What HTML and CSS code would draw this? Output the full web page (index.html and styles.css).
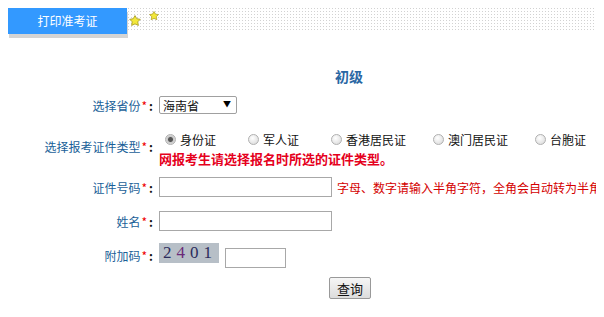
FILE: index.html
```html
<!DOCTYPE html>
<html lang="zh-cn">
<head>
    <meta charset="UTF-8">
    <meta name="viewport" content="width=device-width, initial-scale=1.0">
    <title>打印准考证</title>
    <link rel="stylesheet" href="styles.css">
</head>
<body>
    <div class="top">
        <div class="tab">打印准考证</div>
        <div class="dots">
            <svg class="star star-big" viewBox="0 0 10 10"><polygon points="5,0.5 6.5,3.1 9.4,3.6 7.3,5.7 7.8,8.7 5,7.4 2.2,8.7 2.7,5.7 0.6,3.6 3.5,3.1"/></svg>
            <svg class="star star-small" viewBox="0 0 10 10"><polygon points="5,0.5 6.5,3.1 9.4,3.6 7.3,5.7 7.8,8.7 5,7.4 2.2,8.7 2.7,5.7 0.6,3.6 3.5,3.1"/></svg>
        </div>
    </div>

    <form class="query">
        <h2 class="level">初级</h2>

        <!-- 省份 -->
        <div class="row">
            <label class="name">选择省份<em>*</em><b>:</b></label>
            <div class="field">
                <span class="select-wrap">
                    <select class="province">
                        <option>海南省</option>
                    </select>
                    <span class="arrow">▼</span>
                </span>
            </div>
        </div>

        <!-- 证件类型 -->
        <div class="row row-tall">
            <label class="name">选择报考证件类型<em>*</em><b>:</b></label>
            <div class="field field-stack">
                <div class="radios">
                    <label class="radio-item"><input type="radio" name="idtype" checked>身份证</label>
                    <label class="radio-item"><input type="radio" name="idtype">军人证</label>
                    <label class="radio-item wide"><input type="radio" name="idtype">香港居民证</label>
                    <label class="radio-item wide"><input type="radio" name="idtype">澳门居民证</label>
                    <label class="radio-item"><input type="radio" name="idtype">台胞证</label>
                </div>
                <div class="note">网报考生请选择报名时所选的证件类型。</div>
            </div>
        </div>

        <!-- 证件号码 -->
        <div class="row">
            <label class="name">证件号码<em>*</em><b>:</b></label>
            <div class="field">
                <input type="text" class="text-input">
                <span class="hint">字母、数字请输入半角字符，全角会自动转为半角</span>
            </div>
        </div>

        <!-- 姓名 -->
        <div class="row">
            <label class="name">姓名<em>*</em><b>:</b></label>
            <div class="field">
                <input type="text" class="text-input">
            </div>
        </div>

        <!-- 附加码 -->
        <div class="row">
            <label class="name">附加码<em>*</em><b>:</b></label>
            <div class="field field-code">
                <span class="captcha">2<i>4</i>01</span>
                <input type="text" class="code-input">
            </div>
        </div>

        <div class="row row-btn">
            <span></span>
            <div class="field">
                <button type="button" class="btn">查询</button>
            </div>
        </div>
    </form>
</body>
</html>
```

FILE: styles.css
```css
body {
    margin: 8px;
    font-family: "Noto Sans CJK SC", "Liberation Sans", sans-serif;
    font-size: 12px;
    color: #222;
    background: #fff;
}

.top {
    display: flex;
    margin-right: -8px;
    height: 30px;
}

.tab {
    width: 119px;
    height: 26px;
    line-height: 26px;
    background: #3399ff;
    color: #fff;
    text-align: center;
    font-size: 12px;
    box-shadow: 1px 4px 0 #d4d4d4;
}

.dots {
    flex: 1;
    display: flex;
    align-items: flex-start;
    height: 22px;
    margin-left: 1px;
    background-color: #d2d2d2;
    background-image:
        linear-gradient(to right, transparent 1px, #fff 1px),
        linear-gradient(to bottom, transparent 1px, #fff 1px);
    background-size: 3px 3px;
}

.star {
    fill: #f3e83a;
    stroke: #a69a22;
    stroke-width: 0.7;
}

.star-big {
    width: 12px;
    height: 12px;
    margin-top: 7px;
    margin-left: 1px;
}

.star-small {
    width: 10px;
    height: 10px;
    margin-top: 3px;
    margin-left: 8px;
}

.query {
    margin-top: 26px;
}

.level {
    margin: 0 0 0 327px;
    height: 24px;
    line-height: 24px;
    font-size: 14px;
    font-weight: bold;
    color: #2a67a3;
}

.row {
    display: grid;
    grid-template-columns: 145px auto;
    column-gap: 6px;
    align-items: center;
    height: 34px;
}

.row-tall {
    height: 48px;
}

.row-btn {
    height: 32px;
}

.name {
    text-align: right;
    color: #1a5f98;
    white-space: nowrap;
}

.name em {
    font-style: normal;
    color: #e00;
    margin-left: 1px;
}

.name b {
    color: #111;
    margin-left: 2px;
}

.field {
    display: flex;
    align-items: center;
    white-space: nowrap;
}

.field-stack {
    flex-direction: column;
    align-items: flex-start;
    align-self: start;
    padding-top: 7px;
}

.select-wrap {
    position: relative;
    display: inline-block;
}

.province {
    appearance: none;
    width: 78px;
    height: 18px;
    padding: 0 0 0 3px;
    border: 1px solid #a0a0a0;
    border-radius: 2px;
    background: #fff;
    font-family: inherit;
    font-size: 12px;
    color: #111;
}

.arrow {
    position: absolute;
    right: 6px;
    top: 2px;
    font-size: 8px;
    color: #000;
    pointer-events: none;
}

.radios {
    display: flex;
    height: 20px;
    align-items: center;
    margin-left: 6px;
}

.radio-item {
    display: flex;
    align-items: center;
    width: 83px;
    color: #111;
}

.radio-item.wide {
    width: 102px;
}

.radio-item input {
    appearance: none;
    width: 11px;
    height: 11px;
    margin: 0 4px 0 0;
    border: 1px solid #b0b0b0;
    border-radius: 50%;
    background: radial-gradient(circle at 40% 35%, #fff, #d6d6d6);
}

.radio-item input:checked {
    background: radial-gradient(circle, #555 0 2px, #c8c8c8 3px, #eee);
}

.note {
    height: 20px;
    line-height: 20px;
    font-size: 13px;
    font-weight: bold;
    color: #e5001c;
}

.text-input {
    width: 173px;
    height: 20px;
    box-sizing: border-box;
    margin: 0;
    border: 1px solid #a8a8a8;
}

.hint {
    margin-left: 5px;
    color: #d40000;
}

.field-code {
    align-items: flex-end;
}

.captcha {
    width: 60px;
    height: 20px;
    line-height: 20px;
    margin-bottom: 5px;
    background: #b7bfc7;
    font-family: "Liberation Serif", serif;
    font-size: 17px;
    letter-spacing: 5px;
    text-indent: 4px;
    color: #2c2d5c;
    overflow: hidden;
}

.captcha i {
    font-style: normal;
    color: #6b2a78;
}

.code-input {
    width: 61px;
    height: 20px;
    box-sizing: border-box;
    margin: 0 0 0 6px;
    border: 1px solid #a8a8a8;
}

.btn {
    margin-left: 170px;
    width: 42px;
    height: 22px;
    padding: 0;
    border: 1px solid #999;
    border-radius: 2px;
    background: linear-gradient(#f6f6f6, #dcdcdc);
    font-family: inherit;
    font-size: 13px;
    color: #111;
}
```
